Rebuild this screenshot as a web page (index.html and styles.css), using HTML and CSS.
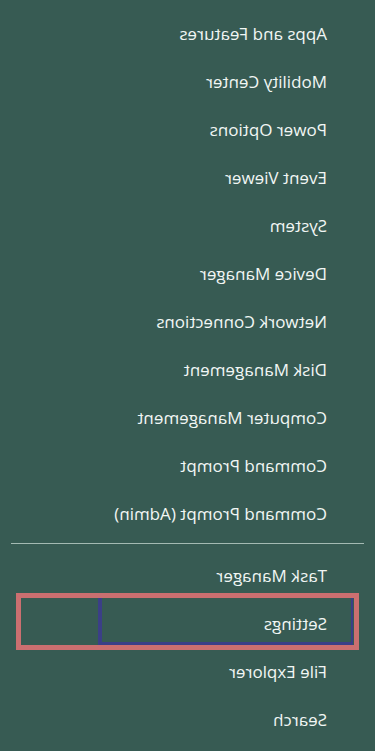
FILE: index.html
```html
<!DOCTYPE html>
<html lang="en">
<head>
    <meta charset="UTF-8">
    <meta name="viewport" content="width=device-width, initial-scale=1.0">
    <title>Quick Link Menu</title>
    <link rel="stylesheet" href="styles.css">
</head>
<body>
    <!-- the screenshot is mirrored, so the whole menu is flipped -->
    <div class="menu">
        <ul class="menu-group">
            <li class="menu-item">Apps and Features</li>
            <li class="menu-item">Mobility Center</li>
            <li class="menu-item">Power Options</li>
            <li class="menu-item">Event Viewer</li>
            <li class="menu-item">System</li>
            <li class="menu-item">Device Manager</li>
            <li class="menu-item">Network Connections</li>
            <li class="menu-item">Disk Management</li>
            <li class="menu-item">Computer Management</li>
            <li class="menu-item">Command Prompt</li>
            <li class="menu-item">Command Prompt (Admin)</li>
        </ul>
        <div class="separator"></div>
        <ul class="menu-group">
            <li class="menu-item">Task Manager</li>
            <li class="menu-item selected">Settings</li>
            <li class="menu-item">File Explorer</li>
            <li class="menu-item">Search</li>
        </ul>
    </div>
</body>
</html>
```

FILE: styles.css
```css
* {
    box-sizing: border-box;
    margin: 0;
    padding: 0;
}

html, body {
    height: 100%;
}

body {
    font-family: "Open Sans", "Noto Sans", "Liberation Sans", sans-serif;
    background-color: #375b53;
    color: #f1f6f4;
    overflow: hidden;
}

.menu {
    transform: scaleX(-1);
    padding-top: 10px;
    min-height: 100%;
}

.menu-group {
    list-style: none;
}

.menu-item {
    position: relative;
    height: 48px;
    line-height: 48px;
    padding-left: 48px;
    font-size: 17px;
    white-space: nowrap;
}

.separator {
    height: 1px;
    margin: 5px 11px 8px;
    background-color: #a4bab3;
}

/* focus frame of the hovered entry */
.menu-item.selected::before {
    content: "";
    position: absolute;
    left: 22px;
    right: 98px;
    top: -2px;
    bottom: 3px;
    border: solid #3b3f87;
    border-width: 0 4px 3px 2px;
}

/* annotation box drawn over the entry */
.menu-item.selected::after {
    content: "";
    position: absolute;
    left: 16px;
    right: 16px;
    top: -7px;
    bottom: -2px;
    border: 5px solid #cb6f70;
}
```
